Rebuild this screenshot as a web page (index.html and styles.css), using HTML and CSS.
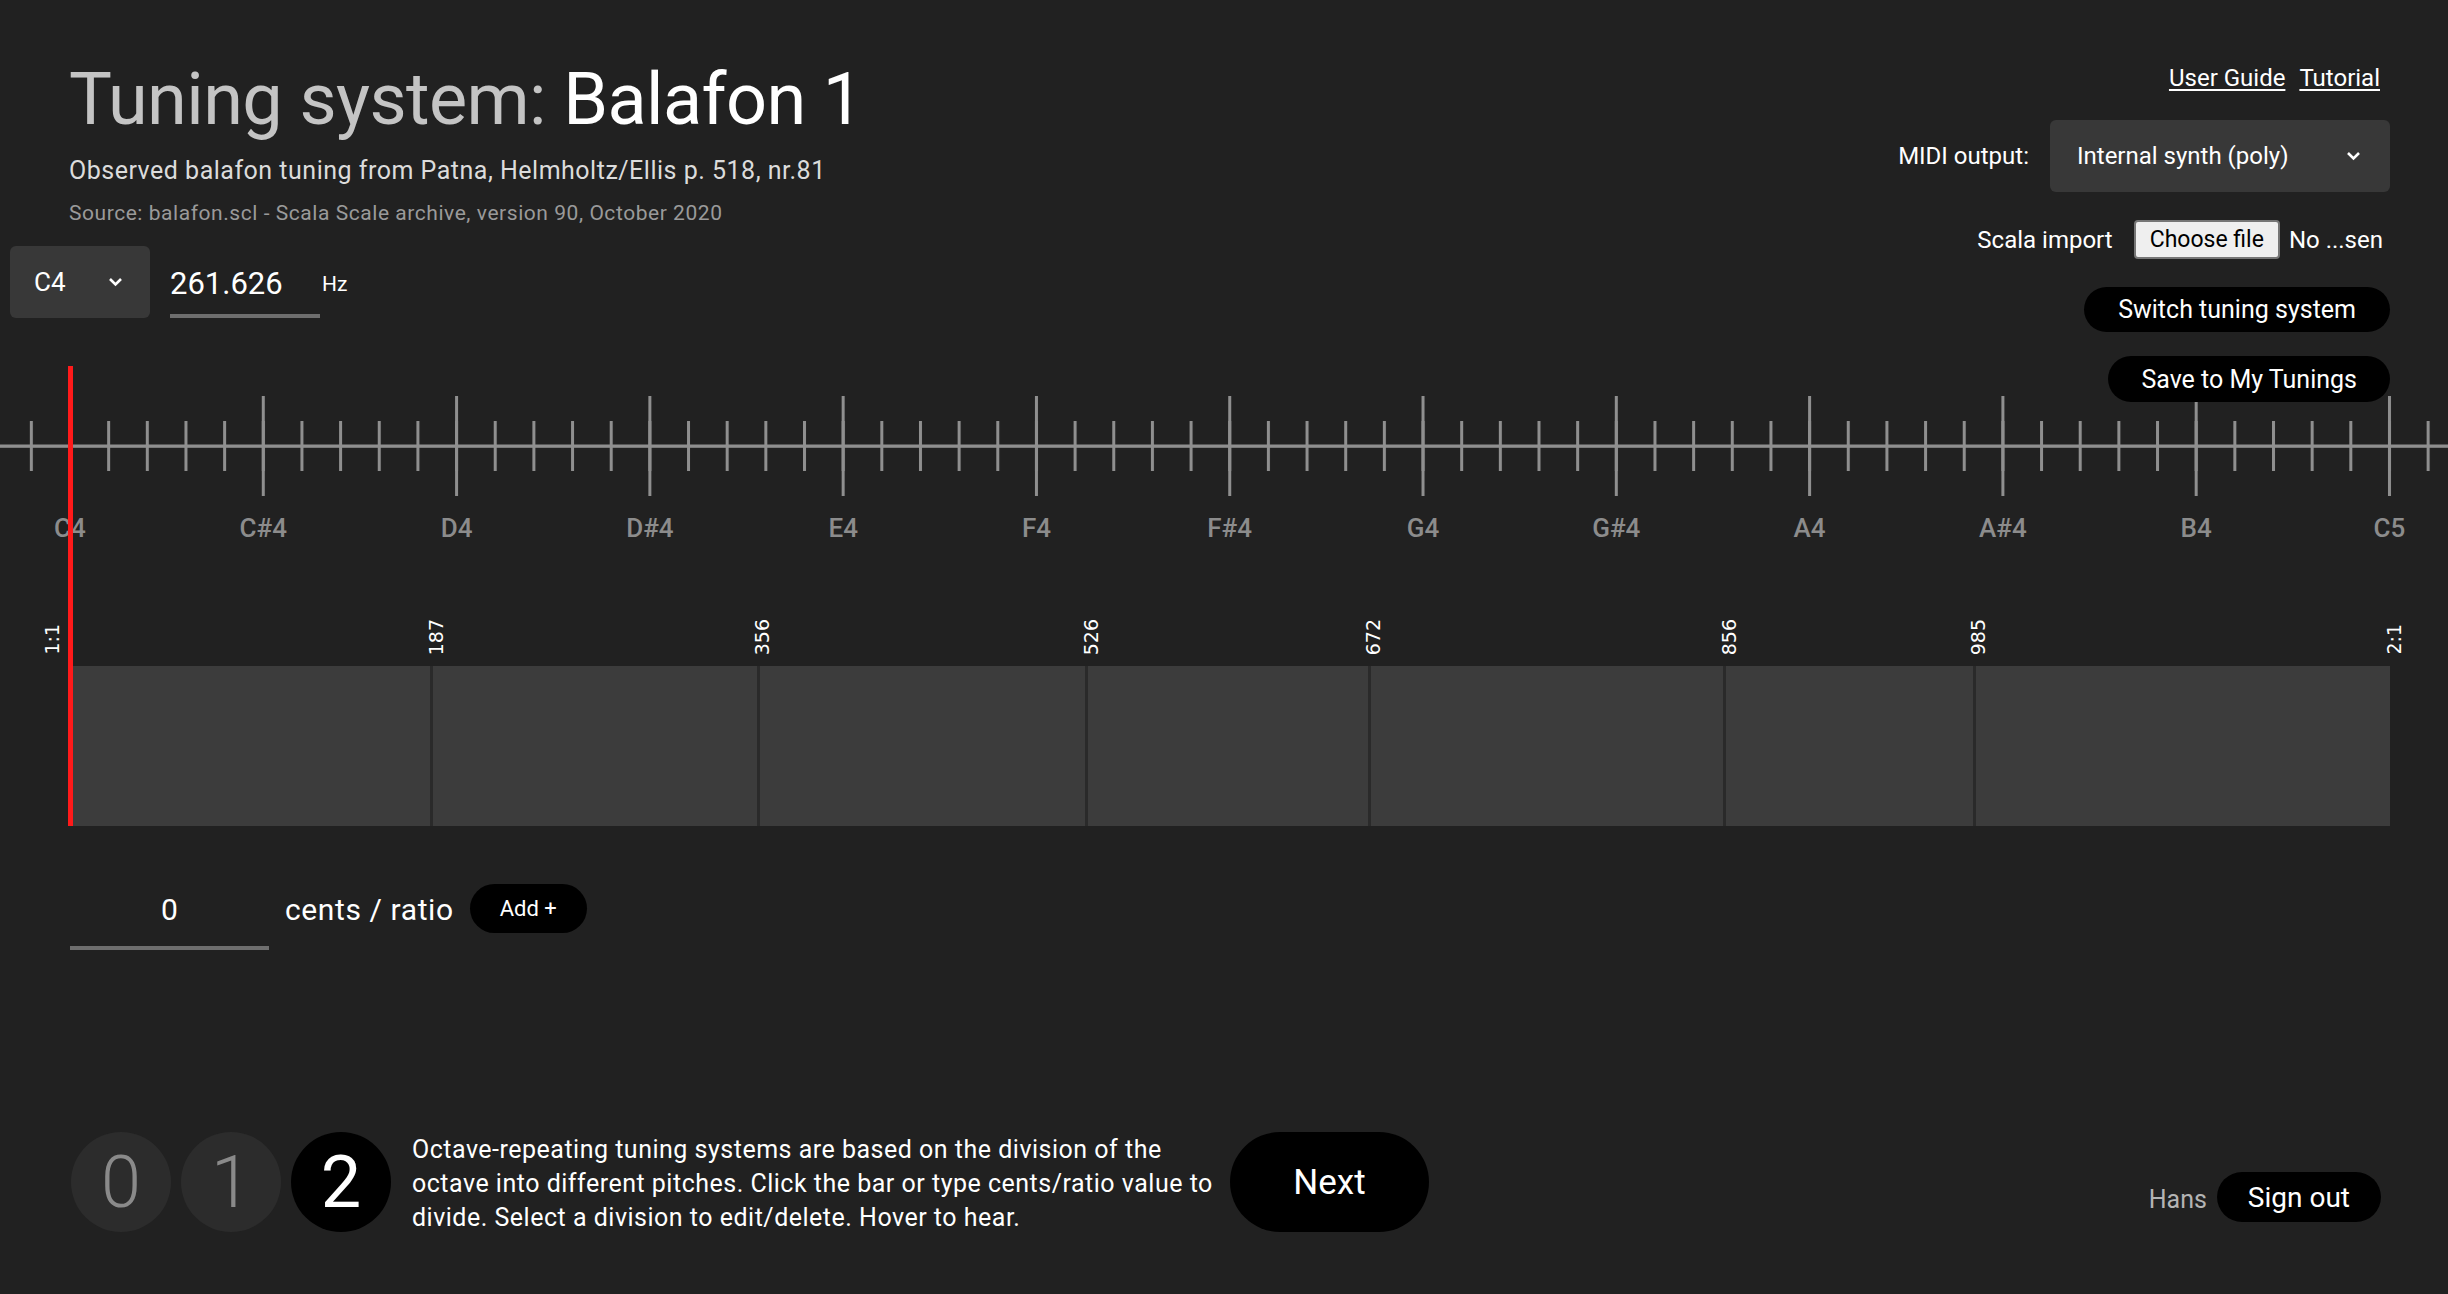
FILE: index.html
```html
<!DOCTYPE html>
<html lang="en">
<head>
<meta charset="utf-8">
<title>Tuning system: Balafon 1</title>
<link rel="stylesheet" href="styles.css">
</head>
<body>
<div class="page">
  <header class="head">
    <div class="intro">
      <h1 class="title"><span class="title-key">Tuning system:</span> <span class="title-name">Balafon 1</span></h1>
      <p class="desc">Observed balafon tuning from Patna, Helmholtz/Ellis p. 518, nr.81</p>
      <p class="source">Source: balafon.scl - Scala Scale archive, version 90, October 2020</p>
    </div>
    <div class="freq-row">
      <div class="note-select">
        <span>C4</span>
        <svg class="chev" width="15" height="10" viewBox="0 0 15 10"><polyline points="2,2 7.5,7.5 13,2" fill="none" stroke="#fff" stroke-width="2.6"/></svg>
      </div>
      <div class="freq-input">261.626</div>
      <span class="hz">Hz</span>
    </div>
  </header>

  <aside class="controls">
    <nav class="links"><a href="#">User Guide</a><a href="#">Tutorial</a></nav>
    <div class="midi">
      <span class="label">MIDI output:</span>
      <div class="select">
        <span>Internal synth (poly)</span>
        <svg class="chev" width="15" height="10" viewBox="0 0 15 10"><polyline points="2,2 7.5,7.5 13,2" fill="none" stroke="#fff" stroke-width="2.6"/></svg>
      </div>
    </div>
    <div class="scala">
      <span class="label">Scala import</span>
      <button class="file-btn">Choose file</button>
      <span class="file-name">No ...sen</span>
    </div>
    <button class="pill switch">Switch tuning system</button>
    <button class="pill save">Save to My Tunings</button>
  </aside>

  <section class="scale">
    <svg class="ruler" viewBox="0 0 2448 185" width="2448" height="185">
      <defs>
        <pattern id="tick-s" x="68.5" y="0" width="38.658" height="185" patternUnits="userSpaceOnUse">
          <rect x="0" y="55" width="3" height="50" fill="#8f8f8f"/>
        </pattern>
        <pattern id="tick-b" x="68.5" y="0" width="193.29" height="185" patternUnits="userSpaceOnUse">
          <rect x="0" y="30" width="3" height="100" fill="#8f8f8f"/>
        </pattern>
      </defs>
      <rect x="0" y="78.5" width="2448" height="3.3" fill="#8f8f8f"/>
      <rect x="0" y="0" width="2448" height="185" fill="url(#tick-s)"/>
      <rect x="0" y="0" width="2448" height="185" fill="url(#tick-b)"/>
      <g class="note-labels">
        <text x="70" y="171">C4</text>
        <text x="263.3" y="171">C#4</text>
        <text x="456.6" y="171">D4</text>
        <text x="649.9" y="171">D#4</text>
        <text x="843.2" y="171">E4</text>
        <text x="1036.5" y="171">F4</text>
        <text x="1229.7" y="171">F#4</text>
        <text x="1423" y="171">G4</text>
        <text x="1616.3" y="171">G#4</text>
        <text x="1809.6" y="171">A4</text>
        <text x="2002.9" y="171">A#4</text>
        <text x="2196.2" y="171">B4</text>
        <text x="2389.5" y="171">C5</text>
      </g>
    </svg>
    <div class="track">
      <div class="ratios">
        <span class="ratio ratio-start" style="left:0%">1:1</span>
        <span class="ratio" style="left:15.583%">187</span>
        <span class="ratio" style="left:29.667%">356</span>
        <span class="ratio" style="left:43.833%">526</span>
        <span class="ratio" style="left:56%">672</span>
        <span class="ratio" style="left:71.333%">856</span>
        <span class="ratio" style="left:82.083%">985</span>
        <span class="ratio" style="left:100%">2:1</span>
      </div>
      <div class="bar">
        <span class="split" style="left:15.583%"></span>
        <span class="split" style="left:29.667%"></span>
        <span class="split" style="left:43.833%"></span>
        <span class="split" style="left:56%"></span>
        <span class="split" style="left:71.333%"></span>
        <span class="split" style="left:82.083%"></span>
      </div>
    </div>
    <div class="playhead"></div>
  </section>

  <div class="add-row">
    <div class="cents-input">0</div>
    <span class="unit">cents / ratio</span>
    <button class="btn-add">Add +</button>
  </div>

  <footer class="foot">
    <div class="steps">
      <div class="step">0</div>
      <div class="step">1</div>
      <div class="step current">2</div>
      <p class="hint">Octave-repeating tuning systems are based on the division of the octave into different pitches. Click the bar or type cents/ratio value to divide. Select a division to edit/delete. Hover to hear.</p>
      <button class="btn-next">Next</button>
    </div>
    <div class="user">
      <span class="user-name">Hans</span>
      <button class="btn-signout">Sign out</button>
    </div>
  </footer>
</div>
</body>
</html>
```

FILE: styles.css
```css
* { box-sizing: border-box; }
html, body { margin: 0; padding: 0; }
body {
  background: #212121;
  color: #fff;
  font-family: Roboto, "Noto Sans", sans-serif;
  overflow: hidden;
}
button {
  font-family: inherit;
  border: 0;
  cursor: pointer;
}
.page {
  position: relative;
  min-height: 100vh;
  display: flex;
  flex-direction: column;
}

/* header */
.head { padding-top: 64px; }
.intro { padding-left: 69px; }
.title {
  margin: 0;
  font-size: 72px;
  line-height: 72px;
  font-weight: 400;
  letter-spacing: -0.6px;
}
.title-key { color: #c4c4c4; }
.title-name { color: #fff; }
.desc {
  margin: 20px 0 0;
  font-size: 25px;
  line-height: 30px;
  letter-spacing: 0.5px;
  color: #dcdcdc;
}
.source {
  margin: 14px 0 0;
  font-size: 21px;
  line-height: 26px;
  letter-spacing: 0.55px;
  color: #9a9a9a;
}
.freq-row {
  display: flex;
  align-items: flex-end;
  margin-top: 20px;
  padding-left: 10px;
}
.note-select {
  width: 140px;
  height: 72px;
  background: #383838;
  border-radius: 6px;
  display: flex;
  align-items: center;
  justify-content: space-between;
  padding: 0 27px 0 24px;
  font-size: 26px;
}
.chev { display: block; }
.freq-input {
  width: 150px;
  margin-left: 20px;
  font-size: 31px;
  line-height: 31px;
  padding-bottom: 15px;
  border-bottom: 4px solid #6e6e6e;
}
.hz {
  font-size: 21px;
  line-height: 21px;
  margin: 0 0 23px 2px;
}

/* right controls */
.controls {
  position: absolute;
  top: 66px;
  right: 58px;
  display: flex;
  flex-direction: column;
  align-items: flex-end;
  z-index: 2;
}
.links {
  display: flex;
  gap: 14px;
  margin-right: 10px;
  font-size: 24px;
  line-height: 24px;
}
.links a {
  color: #fff;
  text-decoration: underline;
  text-decoration-thickness: 2px;
  text-underline-offset: 3px;
}
.midi {
  display: flex;
  align-items: center;
  margin-top: 30px;
}
.label {
  font-size: 24px;
  margin-right: 21px;
}
.select {
  width: 340px;
  height: 72px;
  background: #383838;
  border-radius: 6px;
  display: flex;
  align-items: center;
  justify-content: space-between;
  padding: 0 29px 0 27px;
  font-size: 24px;
}
.scala {
  display: flex;
  align-items: center;
  margin-top: 28px;
  margin-right: 7px;
}
.file-btn {
  height: 39px;
  padding: 0 14px;
  background: #efefef;
  border: 2px solid #767676;
  border-radius: 4px;
  font-size: 23px;
  color: #000;
  margin-right: 9px;
}
.file-name { font-size: 24px; }
.pill {
  height: 45px;
  border-radius: 23px;
  background: #000;
  color: #fff;
  font-size: 25px;
}
.switch { margin-top: 28px; padding: 0 34px; }
.save { margin-top: 24px; height: 46px; padding: 0 33px; }

/* scale */
.scale {
  position: relative;
  margin-top: 48px;
}
.ruler {
  display: block;
  width: 100%;
  height: 185px;
}
.note-labels text {
  font-family: Roboto, sans-serif;
  font-size: 26px;
  font-weight: 500;
  fill: #8c8c8c;
  text-anchor: middle;
}
.track { margin: 0 58px 0 70px; }
.ratios {
  position: relative;
  height: 115px;
}
.ratio {
  position: absolute;
  bottom: 11px;
  margin-left: 4px;
  writing-mode: vertical-rl;
  transform: translateX(-50%) rotate(180deg);
  font-family: "DejaVu Sans", sans-serif;
  font-size: 19px;
  line-height: 20px;
  color: #fff;
}
.ratio-start { margin-left: -18px; }
.bar {
  position: relative;
  height: 160px;
  background: #3c3c3c;
}
.split {
  position: absolute;
  top: 0;
  bottom: 0;
  width: 3px;
  margin-left: -1.5px;
  background: #2a2a2a;
}
.playhead {
  position: absolute;
  left: 67.5px;
  top: 0;
  bottom: 0;
  width: 5px;
  background: #ff1a1a;
}

/* add division */
.add-row {
  display: flex;
  align-items: flex-start;
  margin-top: 58px;
  padding-left: 70px;
}
.cents-input {
  width: 199px;
  margin-top: 11px;
  text-align: center;
  font-size: 30px;
  line-height: 30px;
  padding-bottom: 21px;
  border-bottom: 4px solid #6e6e6e;
}
.unit {
  margin: 11px 0 0 16px;
  font-size: 30px;
  line-height: 30px;
  letter-spacing: 0.6px;
}
.btn-add {
  margin-left: 16px;
  height: 49px;
  padding: 0 30px;
  border-radius: 25px;
  background: #000;
  color: #fff;
  font-size: 22px;
}

/* footer */
.foot {
  margin-top: auto;
  display: flex;
  align-items: flex-end;
  justify-content: space-between;
  padding: 0 67px 62px 71px;
}
.steps {
  display: flex;
  align-items: center;
  height: 100px;
}
.step {
  width: 100px;
  height: 100px;
  border-radius: 50%;
  background: #2c2c2c;
  color: #8a8a8a;
  font-size: 72px;
  font-weight: 300;
  display: flex;
  align-items: center;
  justify-content: center;
  margin-right: 10px;
}
.step.current {
  background: #000;
  color: #fff;
  font-weight: 400;
  margin-right: 0;
}
.hint {
  width: 804px;
  margin: 4px 14px 0 21px;
  font-size: 25px;
  line-height: 34px;
  letter-spacing: 0.5px;
}
.btn-next {
  width: 199px;
  height: 100px;
  border-radius: 50px;
  background: #000;
  color: #fff;
  font-size: 35px;
}
.user {
  display: flex;
  align-items: flex-end;
  margin-bottom: 10px;
}
.user-name {
  font-size: 25px;
  line-height: 25px;
  color: #b4b4b4;
  margin: 0 10px 10px 0;
}
.btn-signout {
  height: 50px;
  padding: 0 31px;
  border-radius: 25px;
  background: #000;
  color: #fff;
  font-size: 28px;
}
```
